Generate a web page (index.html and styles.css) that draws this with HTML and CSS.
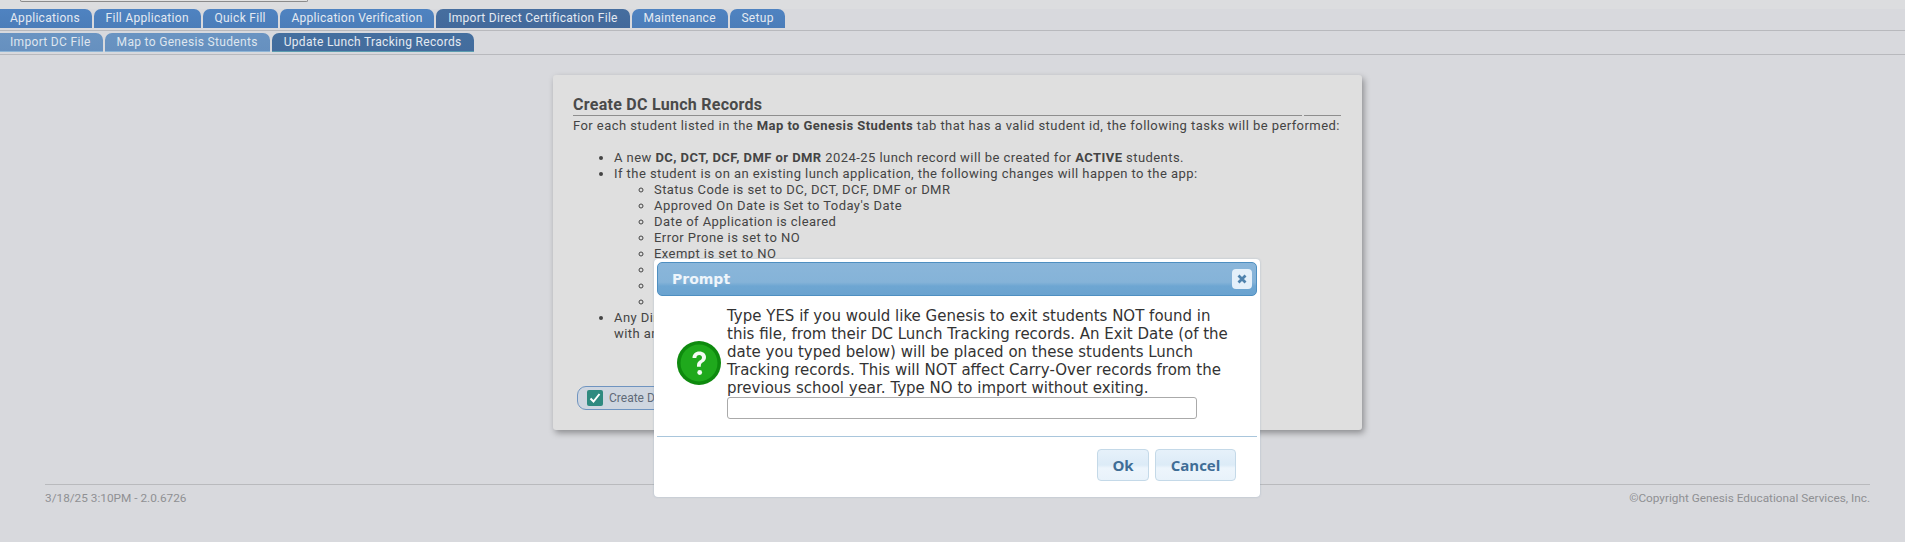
FILE: index.html
```html
<!DOCTYPE html>
<html lang="en">
<head>
<meta charset="utf-8">
<title>Create DC Lunch Records</title>
<link rel="stylesheet" href="styles.css">
</head>
<body>
<div class="topbar"><div class="searchbox"></div></div>
<nav class="tabs main-tabs">
  <a class="tab first">Applications</a>
  <a class="tab">Fill Application</a>
  <a class="tab">Quick Fill</a>
  <a class="tab">Application Verification</a>
  <a class="tab active">Import Direct Certification File</a>
  <a class="tab">Maintenance</a>
  <a class="tab">Setup</a>
</nav>
<nav class="tabs sub-tabs">
  <a class="tab first">Import DC File</a>
  <a class="tab">Map to Genesis Students</a>
  <a class="tab active">Update Lunch Tracking Records</a>
</nav>
<main class="content">
  <section class="card">
    <h2 class="card-title">Create DC Lunch Records</h2>
    <div class="title-rule"><span class="rule-long"></span><span class="rule-short"></span></div>
    <p class="intro">For each student listed in the <b>Map to Genesis Students</b> tab that has a valid student id, the following tasks will be performed:</p>
    <ul class="tasks">
      <li>A new <b>DC, DCT, DCF, DMF or DMR</b> 2024-25 lunch record will be created for <b>ACTIVE</b> students.</li>
      <li>If the student is on an existing lunch application, the following changes will happen to the app:
        <ul>
          <li>Status Code is set to DC, DCT, DCF, DMF or DMR</li>
          <li>Approved On Date is Set to Today's Date</li>
          <li>Date of Application is cleared</li>
          <li>Error Prone is set to NO</li>
          <li>Exempt is set to NO</li>
          <li>&nbsp;</li>
          <li>&nbsp;</li>
          <li>&nbsp;</li>
        </ul>
      </li>
      <li>Any Direct<br>with an</li>
    </ul>
    <button class="create-btn" type="button">
      <svg class="check" viewBox="0 0 16 16" width="16" height="16"><rect width="16" height="16" rx="2" fill="#2f8a80"/><path d="M3.500 8.500l3 3 6-7.500" fill="none" stroke="#fff" stroke-width="2"/></svg>
      <span>Create DC Lunch Records</span>
    </button>
  </section>
</main>
<footer class="footer">
  <span>3/18/25 3:10PM - 2.0.6726</span>
  <span>©Copyright Genesis Educational Services, Inc.</span>
</footer>

<div class="dialog" role="dialog">
  <header class="dialog-title">
    <span>Prompt</span>
    <span class="close"><svg viewBox="0 0 10 10" width="10" height="10"><path d="M1.500 1.500l7 7M8.500 1.500l-7 7" stroke="#4f83ae" stroke-width="2.800" fill="none"/></svg></span>
  </header>
  <div class="dialog-body">
    <svg class="qicon" viewBox="0 0 44 44" width="44" height="44">
      <circle cx="22" cy="22" r="22" fill="#0e8a0e"/>
      <circle cx="22" cy="22" r="18.500" fill="#1fa91c"/>
      <path d="M15.500 17c0-4 3-6.500 6.800-6.500 4 0 6.700 2.400 6.700 5.700 0 2.600-1.400 3.900-3.100 5.100-1.500 1.100-2.100 1.800-2.100 3.700v.8h-3.800v-1.300c0-2.500 1-3.700 2.700-5 1.400-1 2.300-1.800 2.300-3.100 0-1.500-1.100-2.500-2.700-2.500-1.800 0-2.900 1.200-3 3.100z" fill="#f4fbf4"/>
      <circle cx="22.700" cy="31.500" r="2.400" fill="#f4fbf4"/>
    </svg>
    <div class="dialog-msg">
      <div class="msg-text">Type YES if you would like Genesis to exit students NOT found in this file, from their DC Lunch Tracking records. An Exit Date (of the date you typed below) will be placed on these students Lunch Tracking records. This will NOT affect Carry-Over records from the previous school year. Type NO to import without exiting.</div>
      <input class="msg-input" type="text">
    </div>
  </div>
  <div class="dialog-actions">
    <button class="dlg-btn ok" type="button">Ok</button>
    <button class="dlg-btn cancel" type="button">Cancel</button>
  </div>
</div>
</body>
</html>
```
FILE: styles.css
```css
* { box-sizing: border-box; }
html, body { margin: 0; padding: 0; height: 542px; overflow: hidden; }
body {
  background: #d8d9dd;
  font-family: Roboto, "Liberation Sans", sans-serif;
  font-size: 13px;
  color: #444;
}
.topbar { height: 9px; padding-left: 20px; background: #dcdddf; }
.searchbox {
  width: 288px; height: 2px;
  border: 1px solid #8b8b8b; border-top: 0;
  border-radius: 0 0 3px 3px;
  background: #e2e2e2;
}
.tabs { display: flex; gap: 2px; border-bottom: 1px solid #b8b9bd; }
.main-tabs { height: 22px; padding-bottom: 2px; }
.sub-tabs { height: 24px; padding-top: 2px; padding-bottom: 2px; }
.tab {
  display: flex; align-items: center;
  padding: 0 12px 1px 12px;
  font-size: 12px;
  letter-spacing: 0.32px;
  color: #e4eaf2;
  border-radius: 0 7px 0 0;
  border-top-left-radius: 7px;
}
.tab.first { border-top-left-radius: 0; padding-left: 10px; }
.main-tabs .tab { padding-left: 11.800px; padding-right: 11.800px; letter-spacing: .29px; background: linear-gradient(#4f83c1, #4b7db9); }
.main-tabs .tab.first { padding-left: 10px; }
.main-tabs .tab.active { background: linear-gradient(#466e9f, #43699b); }
.sub-tabs .tab { background: linear-gradient(#6a94c2, #6690bf); border-bottom: 1px solid #8fb6d6; color: #dfe6ef; }
.sub-tabs .tab.active { background: linear-gradient(#446f9f, #436c9d); border-bottom: 1px solid #5d9db0; color: #e4eaf2; }
.content { display: flex; justify-content: center; padding: 20px 0 0 10px; }
.card {
  width: 809px; height: 355px;
  padding: 20px 21px 0 20px;
  background: #dfdfdf;
  border-radius: 3px;
  box-shadow: 2px 3px 6px rgba(0,0,0,.35);
}
.card-title { margin: 0; font-size: 16px; line-height: 20px; font-weight: 700; letter-spacing: .27px; color: #4a4a4a; }
.title-rule { display: flex; gap: 2px; height: 2px; margin-top: 0; }
.rule-long { flex: 1; border-top: 1px solid #8e8e8e; }
.rule-short { width: 37px; border-top: 1px solid #8e8e8e; }
.intro { margin: 0; line-height: 16px; padding-top: 1px; letter-spacing: .44px; white-space: nowrap; }
.tasks { margin: 16px 0 0; padding: 0 0 0 41px; line-height: 16px; letter-spacing: .44px; }
.tasks ul { margin: 0; padding: 0 0 0 40px; }
.create-btn {
  display: flex; align-items: center; gap: 6px;
  margin-top: 44px; margin-left: 4px;
  width: 200px; height: 24px;
  padding: 0 9px;
  background: #cfd6e0;
  border: 1px solid #6f94c0;
  border-radius: 9px;
  font: 12px Roboto, sans-serif;
  color: #5f6a78;
}
.check { flex: none; }
.footer {
  display: flex; justify-content: space-between;
  margin: 54px 35px 0 45px;
  padding-top: 6px;
  border-top: 1px solid #b9babd;
  font-size: 11.800px;
  line-height: 14px;
  color: #8f9093;
}
.dialog {
  position: absolute; left: 654px; top: 259px;
  width: 606px; height: 238px;
  padding: 3px;
  background: #fff;
  border-radius: 4px;
  box-shadow: 0 0 2px rgba(120,150,180,.5);
  font-family: "DejaVu Sans", Verdana, sans-serif;
}
.dialog-title {
  display: flex; justify-content: space-between; align-items: center;
  height: 34px;
  padding: 0 4px 0 14px;
  background: linear-gradient(#8ab6da 0%, #85b3d8 60%, #6ea6d2 72%, #6aa3d0 100%);
  border: 1px solid #4e8fc1;
  border-radius: 5px;
  font-size: 14px; font-weight: 700;
  color: #eef5fb;
}
.close {
  display: flex; align-items: center; justify-content: center;
  width: 20px; height: 20px;
  background: #e4f0fa;
  border-radius: 4px;
}
.dialog-body { display: flex; align-items: center; gap: 6px; padding: 11px 20px 0; }
.qicon { flex: none; }
.dialog-msg { width: 505px; }
.msg-text { font-size: 15px; line-height: 18px; color: #333; }
.msg-input {
  display: block; width: 470px; height: 22px; margin: 0;
  background: #fff;
  border: 1px solid #aaa; border-radius: 3px;
  padding: 0;
}
.dialog-actions {
  display: flex; justify-content: flex-end; gap: 6px;
  margin-top: 17px;
  padding: 12px 21px 0 0;
  border-top: 1px solid #a9c6dc;
}
.dlg-btn {
  height: 32px; padding: 0;
  background: linear-gradient(#e6f1fa 0%, #dcebf7 50%, #edf5fc 60%, #e8f2fa 100%);
  border: 1px solid #c4d9e8;
  border-radius: 4px;
  font: 700 15px "Open Sans", sans-serif;
  color: #3f6d96;
}
.ok { width: 52px; }
.cancel { width: 81px; }
```
